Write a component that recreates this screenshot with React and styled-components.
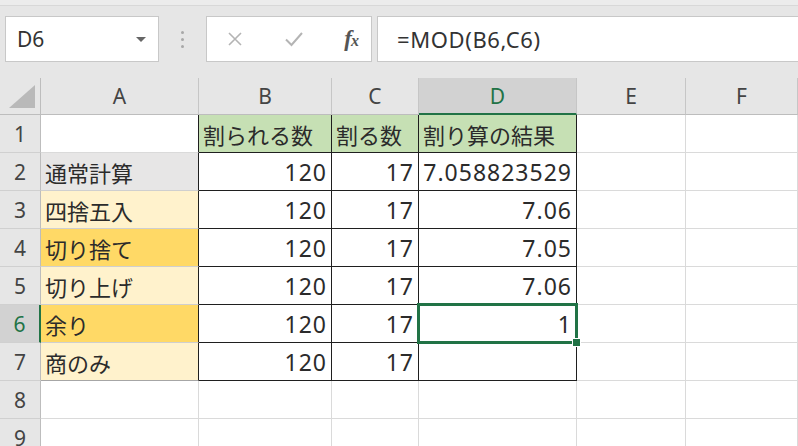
import React from 'react';
import styled, { createGlobalStyle } from 'styled-components';

const GREEN = '#217346';
const GRID = '#dadada';
const DARK = '#1f1f1f';

const GlobalStyle = createGlobalStyle`
  html, body {
    margin: 0;
    padding: 0;
    background: #fff;
    overflow: hidden;
  }
  body {
    font-family: "Noto Sans", "Noto Sans CJK JP", sans-serif;
  }
`;

const Page = styled.div`
  width: 798px;
  height: 446px;
  overflow: hidden;
`;

const Toolbar = styled.div`
  height: 78px;
  box-sizing: border-box;
  padding: 16px 0 0 5px;
  display: flex;
  align-items: flex-start;
  background: linear-gradient(#ececec 0 5px, #d8d8d8 5px 6px, #e6e6e6 6px);
`;

const NameBox = styled.div`
  width: 154px;
  height: 46px;
  box-sizing: border-box;
  border: 1px solid #c8c8c8;
  background: #fff;
  display: flex;
  align-items: center;
  justify-content: space-between;
  padding: 0 12px 0 11px;
  font-size: 21px;
  color: #333;
`;

const DropArrow = styled.span`
  width: 0;
  height: 0;
  border-left: 5px solid transparent;
  border-right: 5px solid transparent;
  border-top: 5px solid #666;
`;

const Grip = styled.div`
  width: 47px;
  height: 46px;
  display: flex;
  flex-direction: column;
  align-items: center;
  justify-content: center;
  gap: 4px;
`;

const Dot = styled.span`
  width: 3px;
  height: 3px;
  border-radius: 50%;
  background: #a8a8a8;
`;

const FxBox = styled.div`
  width: 166px;
  height: 46px;
  box-sizing: border-box;
  border: 1px solid #c8c8c8;
  background: #fff;
  margin-right: 5px;
  display: flex;
  align-items: center;
  padding: 0 13px 0 20px;
  justify-content: space-between;
`;

const Fx = styled.span`
  font-family: "Liberation Serif", serif;
  font-style: italic;
  font-weight: bold;
  font-size: 23px;
  color: #555;
  letter-spacing: -1px;

  small {
    font-size: 16px;
  }
`;

const FormulaBar = styled.div`
  flex: 1;
  height: 46px;
  box-sizing: border-box;
  border: 1px solid #c8c8c8;
  border-right: none;
  background: #fff;
  display: flex;
  align-items: center;
  padding-left: 19px;
  font-family: "Noto Sans", sans-serif;
  font-size: 22px;
  letter-spacing: 0.6px;
  color: #333;
`;

const Sheet = styled.div`
  display: grid;
  grid-template-columns: 41px 158px 133px 87px 158px 109px 112px;
  grid-template-rows: 37px repeat(9, 38px);
`;

const Corner = styled.div`
  box-sizing: border-box;
  background: #e6e6e6;
  border-right: 1px solid #bdbdbd;
  border-bottom: 1px solid #bdbdbd;
  position: relative;
`;

const Triangle = styled.svg`
  position: absolute;
  right: 5px;
  bottom: 6px;
`;

const ColHead = styled.div`
  box-sizing: border-box;
  display: flex;
  align-items: center;
  justify-content: center;
  background: ${(p) => (p.$active ? '#d2d2d2' : '#e6e6e6')};
  color: ${(p) => (p.$active ? GREEN : '#444')};
  border-right: 1px solid #c6c6c6;
  border-bottom: ${(p) => (p.$active ? `2px solid ${GREEN}` : '1px solid #bdbdbd')};
  font-size: 21px;
`;

const RowHead = styled.div`
  box-sizing: border-box;
  display: flex;
  align-items: center;
  justify-content: center;
  background: ${(p) => (p.$active ? '#d2d2d2' : '#e6e6e6')};
  color: ${(p) => (p.$active ? GREEN : '#444')};
  border-right: ${(p) => (p.$active ? `2px solid ${GREEN}` : '1px solid #bdbdbd')};
  border-bottom: 1px solid #d0d0d0;
  font-size: 21px;
`;

const Cell = styled.div`
  box-sizing: border-box;
  position: relative;
  display: flex;
  align-items: center;
  justify-content: ${(p) => (p.$num ? 'flex-end' : 'flex-start')};
  padding: 0 ${(p) => (p.$num ? '4px' : '5px')} 0 4px;
  background: ${(p) => p.$bg || '#fff'};
  border-right: 1px solid ${(p) => p.$rc || GRID};
  border-bottom: 1px solid ${(p) => p.$bc || GRID};
  font-family: ${(p) => (p.$num ? '"Noto Sans", sans-serif' : '"Noto Sans CJK JP", sans-serif')};
  font-size: ${(p) => (p.$num ? '23px' : '22px')};
  letter-spacing: ${(p) => (p.$num ? '1px' : '0')};
  color: #2b2b2b;
  white-space: nowrap;
`;

const Selection = styled.div`
  position: absolute;
  z-index: 2;
  left: -2px;
  top: -2px;
  right: -2px;
  bottom: -2px;
  border: 3px solid ${GREEN};
  pointer-events: none;
`;

const Handle = styled.span`
  position: absolute;
  right: -6px;
  bottom: -6px;
  width: 7px;
  height: 7px;
  background: ${GREEN};
  border: 1px solid #fff;
`;

const columns = ['A', 'B', 'C', 'D', 'E', 'F'];

const rows = [
  { a: '', aBg: '#fff', b: '割られる数', c: '割る数', d: '割り算の結果', head: true },
  { a: '通常計算', aBg: '#e7e6e6', b: '120', c: '17', d: '7.058823529' },
  { a: '四捨五入', aBg: '#fff2cc', b: '120', c: '17', d: '7.06' },
  { a: '切り捨て', aBg: '#ffd966', b: '120', c: '17', d: '7.05' },
  { a: '切り上げ', aBg: '#fff2cc', b: '120', c: '17', d: '7.06' },
  { a: '余り', aBg: '#ffd966', b: '120', c: '17', d: '1' },
  { a: '商のみ', aBg: '#fff2cc', b: '120', c: '17', d: '' },
];

const XIcon = () => (
  <svg width="16" height="16" viewBox="0 0 16 16">
    <path d="M2 2 L14 14 M14 2 L2 14" stroke="#b4b4b4" strokeWidth="1.6" fill="none" />
  </svg>
);

const CheckIcon = () => (
  <svg width="20" height="16" viewBox="0 0 20 16">
    <path d="M2 8.5 L7.5 14 L18 2" stroke="#b4b4b4" strokeWidth="2" fill="none" />
  </svg>
);

const App = () => {
  return (
    <Page>
      <GlobalStyle />
      <Toolbar>
        <NameBox>
          D6
          <DropArrow />
        </NameBox>
        <Grip>
          <Dot />
          <Dot />
          <Dot />
        </Grip>
        <FxBox>
          <XIcon />
          <CheckIcon />
          <Fx>
            f<small>x</small>
          </Fx>
        </FxBox>
        <FormulaBar>=MOD(B6,C6)</FormulaBar>
      </Toolbar>

      <Sheet>
        <Corner>
          <Triangle width="26" height="23" viewBox="0 0 26 23">
            <polygon points="26,0 26,23 0,23" fill="#b9b9b9" />
          </Triangle>
        </Corner>
        {columns.map((c) => (
          <ColHead key={c} $active={c === 'D'}>
            {c}
          </ColHead>
        ))}

        {rows.map((r, i) => {
          const n = i + 1;
          const last = n === 7;
          const body = !r.head;
          return (
            <React.Fragment key={n}>
              <RowHead $active={n === 6}>{n}</RowHead>
              <Cell $bg={r.aBg} $rc={DARK} $bc={last ? '#a6a6a6' : n === 1 ? GRID : '#cfcfcf'}>
                {r.a}
              </Cell>
              {['b', 'c', 'd'].map((k) => (
                <Cell
                  key={k}
                  $num={body}
                  $bg={r.head ? '#c6e0b4' : '#fff'}
                  $rc={DARK}
                  $bc={DARK}
                >
                  {r[k]}
                  {n === 6 && k === 'd' && (
                    <Selection>
                      <Handle />
                    </Selection>
                  )}
                </Cell>
              ))}
              <Cell />
              <Cell />
            </React.Fragment>
          );
        })}

        {[8, 9].map((n) => (
          <React.Fragment key={n}>
            <RowHead>{n}</RowHead>
            {columns.map((c) => (
              <Cell key={c} />
            ))}
          </React.Fragment>
        ))}
      </Sheet>
    </Page>
  );
};

export default App;
